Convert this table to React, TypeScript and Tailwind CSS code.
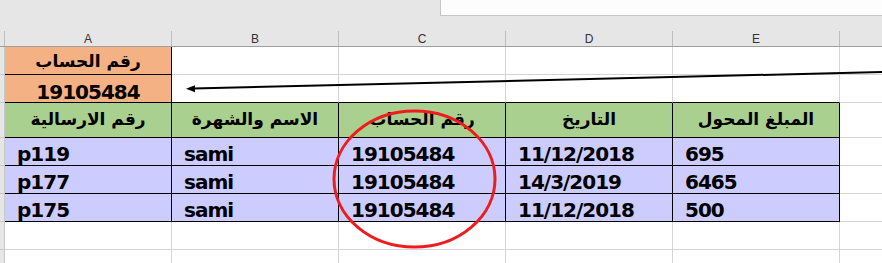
const cols = ['A', 'B', 'C', 'D', 'E'];

const heads = ['رقم الارسالية', 'الاسم والشهرة', 'رقم الحساب', 'التاريخ', 'المبلغ المحول'];

const rows = [
  ['p119', 'sami', '19105484', '11/12/2018', '695'],
  ['p177', 'sami', '19105484', '14/3/2019', '6465'],
  ['p175', 'sami', '19105484', '11/12/2018', '500'],
];

function Strip({ h }: { h: string }) {
  return <div className={`w-[5px] ${h} shrink-0 bg-[#e6e6e6] border-r border-b border-[#c8c8c8]`} />;
}

export default function App() {
  const num = "font-['DejaVu_Sans',sans-serif] font-bold text-[20px] leading-[20px] tracking-[-1px] text-black";
  const ar = "font-['DejaVu_Sans',sans-serif] font-bold text-[17px] leading-[22px] text-black";
  return (
    <div className="relative w-[882px] h-[263px] overflow-hidden bg-white">
      {/* ribbon / formula area */}
      <div className="h-[31px] bg-[#e6e6e6] flex justify-end">
        <div className="w-[442px] h-[16px] bg-[#fdfdfd] border-l border-b border-[#c6c6c6]" />
      </div>

      {/* column headers */}
      <div className="flex h-[16px] bg-[#e6e6e6] border-b border-[#9e9e9e]">
        <div className="w-[5px] border-r border-[#bdbdbd]" />
        {cols.map((c) => (
          <div key={c} className="w-[167px] border-r border-[#bdbdbd] flex items-center justify-center text-[12px] text-[#333] font-['Liberation_Sans',sans-serif]">
            {c}
          </div>
        ))}
        <div className="flex-1" />
      </div>

      {/* row 1 */}
      <div className="flex">
        <Strip h="h-[28px]" />
        <div className="w-[167px] h-[28px] bg-[#f4b183] border-r border-b border-black flex items-end justify-center pb-[2px]">
          <span dir="rtl" className={ar}>رقم الحساب</span>
        </div>
        {[1, 2, 3, 4].map((i) => (
          <div key={i} className="w-[167px] h-[28px] border-r border-b border-[#d4d4d4]" />
        ))}
        <div className="flex-1 h-[28px] border-b border-[#d4d4d4]" />
      </div>

      {/* row 2 */}
      <div className="flex">
        <Strip h="h-[28px]" />
        <div className="w-[167px] h-[28px] bg-[#f4b183] border-r border-b border-black flex items-end justify-center">
          <span className={num}>19105484</span>
        </div>
        {[1, 2, 3, 4].map((i) => (
          <div key={i} className="w-[167px] h-[28px] border-r border-b border-r-[#d4d4d4] border-b-black" />
        ))}
        <div className="flex-1 h-[28px] border-b border-[#d4d4d4]" />
      </div>

      {/* table header */}
      <div className="flex">
        <Strip h="h-[35px]" />
        {heads.map((t) => (
          <div key={t} className="w-[167px] h-[35px] bg-[#a9d08e] border-r border-b border-black flex items-center justify-center pb-[2px]">
            <span dir="rtl" className={ar}>{t}</span>
          </div>
        ))}
        <div className="flex-1 h-[35px] border-b border-[#d4d4d4]" />
      </div>

      {/* data */}
      {rows.map((r, ri) => (
        <div key={ri} className="flex">
          <Strip h="h-[28px]" />
          {r.map((v, ci) => (
            <div key={ci} className="w-[167px] h-[28px] bg-[#ccccff] border-r border-b border-black flex items-end pl-[12px] pb-[1px]">
              <span className={num}>{v}</span>
            </div>
          ))}
          <div className="flex-1 h-[28px] border-b border-[#d4d4d4]" />
        </div>
      ))}

      {/* empty rows */}
      {['h-[28px]', 'h-[28px]'].map((h, i) => (
        <div key={i} className="flex">
          <Strip h={h} />
          {cols.map((c) => (
            <div key={c} className={`w-[167px] ${h} border-r border-b border-[#d4d4d4]`} />
          ))}
          <div className={`flex-1 ${h} border-b border-[#d4d4d4]`} />
        </div>
      ))}

      {/* arrow + circle drawn on top */}
      <svg className="absolute inset-0 pointer-events-none" width="882" height="263" viewBox="0 0 882 263">
        <line x1="883" y1="72" x2="193" y2="88.5" stroke="#000" strokeWidth="2" />
        <polygon points="186,88.8 195,85.2 195,92.2" fill="#000" />
        <ellipse cx="414.5" cy="179" rx="80.5" ry="68" fill="none" stroke="#ee1c1c" strokeWidth="3" />
      </svg>
    </div>
  );
}
